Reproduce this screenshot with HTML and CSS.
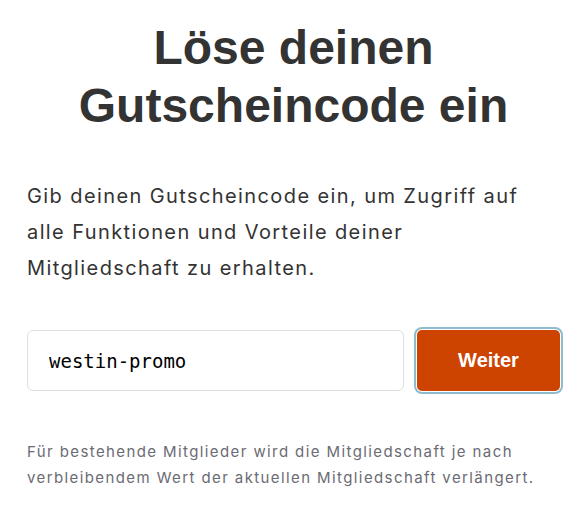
FILE: index.html
```html
<!DOCTYPE HTML>
<html>

	<head>
		<meta http-equiv="Content-Type" content="text/html; charset=utf-8">
		<link rel="stylesheet" href="styles.css">
	</head>

	<body>
		<div class="wrap">
			<h1 class="title">Löse deinen Gutscheincode ein</h1>
			<p class="intro">Gib deinen Gutscheincode ein, um Zugriff auf alle Funktionen und Vorteile deiner Mitgliedschaft zu erhalten.</p>
			<form class="redeem" onsubmit="return false;">
				<input class="code" type="text" value="westin-promo">
				<button class="submit" type="submit">Weiter</button>
			</form>
			<p class="note">Für bestehende Mitglieder wird die Mitgliedschaft je nach verbleibendem Wert der aktuellen Mitgliedschaft verlängert.</p>
		</div>
	</body>

</html>
```

FILE: styles.css
```css
* {
	margin: 0;
	padding: 0;
	box-sizing: border-box;
}

body {
	background: #fff;
	font-family: Inter, "Liberation Sans", sans-serif;
	color: #333;
}

.wrap {
	padding: 19px 16px 0 27px;
}

.title {
	font-family: "Liberation Sans", Arial, sans-serif;
	font-size: 48px;
	line-height: 1.2;
	font-weight: bold;
	text-align: center;
	color: #333;
}

.intro {
	margin-top: 44px;
	font-size: 20px;
	line-height: 36px;
	letter-spacing: 1.4px;
	color: #333;
}

.redeem {
	display: flex;
	gap: 13px;
	margin-top: 44px;
}

.code {
	flex: 1;
	height: 61px;
	padding: 0 21px;
	border: 1px solid #dcdfe3;
	border-radius: 6px;
	font-family: "DejaVu Sans Mono", monospace;
	font-size: 19px;
	color: #000;
	outline: none;
}

.submit {
	width: 143px;
	height: 61px;
	border: none;
	border-radius: 5px;
	background: #cc4400;
	color: #fff;
	font-family: "Liberation Sans", Arial, sans-serif;
	font-size: 20px;
	font-weight: bold;
	box-shadow: 0 0 0 1px #fff, 0 0 0 3px #8fbbcf;
}

.note {
	margin-top: 48px;
	font-size: 15px;
	line-height: 26px;
	letter-spacing: 1.4px;
	color: #6b6b73;
}
```
